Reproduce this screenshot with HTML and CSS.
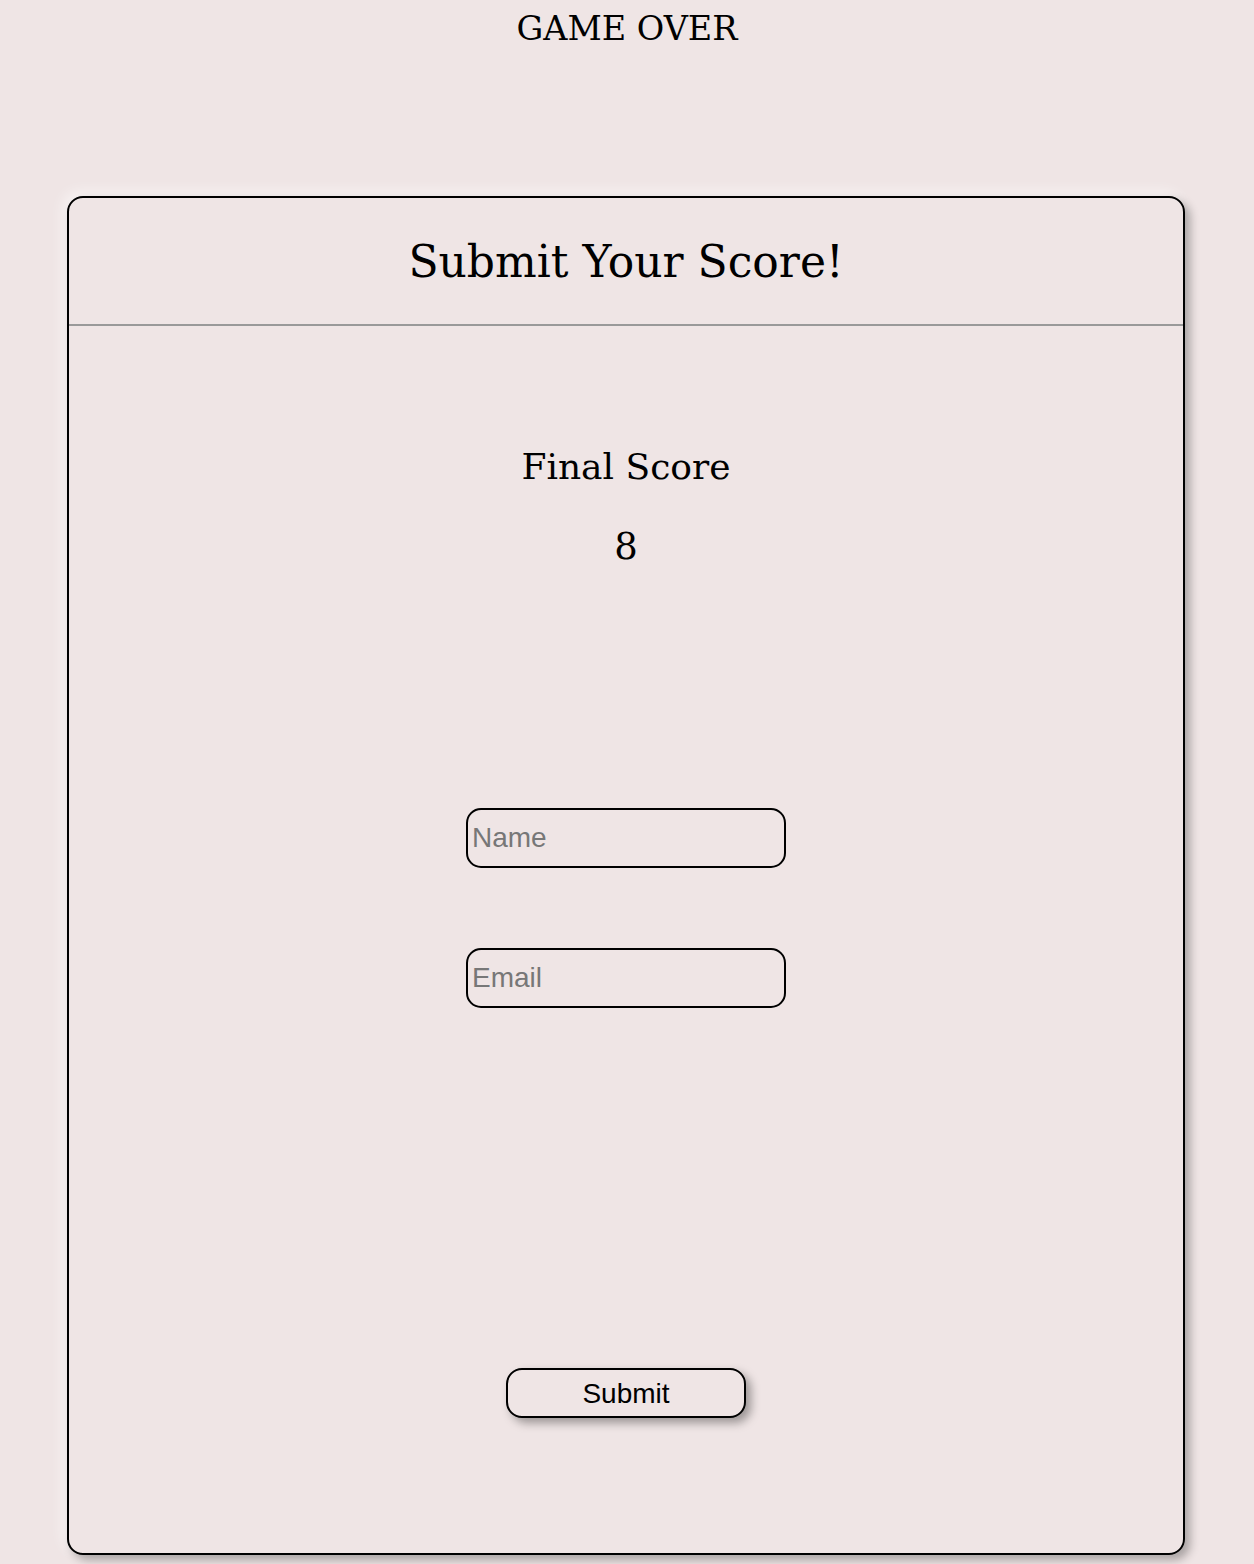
FILE: index.html
```html
<!DOCTYPE html>
<html>
<head>
<meta charset="utf-8">
<link rel="stylesheet" href="styles.css">
</head>
<body>
<h1 class="title">GAME OVER</h1>
<div class="card">
  <div class="card-header">Submit Your Score!</div>
  <div class="card-body">
    <div class="label">Final Score</div>
    <div class="score">8</div>
    <form class="form">
      <input class="field" type="text" placeholder="Name">
      <input class="field" type="email" placeholder="Email">
      <button class="submit" type="button">Submit</button>
    </form>
  </div>
</div>
</body>
</html>
```
FILE: styles.css
```css
html, body { margin: 0; padding: 0; }
body {
  background: #efe5e5;
  font-family: "DejaVu Serif", "Liberation Serif", serif;
  color: #000;
  width: 1254px;
  height: 1564px;
  overflow: hidden;
}
.title {
  margin: 0;
  padding-top: 8px;
  text-align: center;
  font-weight: normal;
  font-size: 33.5px;
  line-height: 42px;
}
.card {
  box-sizing: border-box;
  margin: 146px 69px 0 67px;
  height: 1359px;
  border: 2px solid #000;
  border-radius: 16px;
  box-shadow: 5px 5px 10px rgba(0,0,0,0.3), -4px -4px 14px rgba(255,255,255,0.6);
  display: flex;
  flex-direction: column;
}
.card-header {
  height: 126px;
  border-bottom: 2px solid #999;
  display: flex;
  align-items: center;
  justify-content: center;
  font-size: 44px;
}
.card-body {
  display: flex;
  flex-direction: column;
  align-items: center;
}
.label {
  margin-top: 118px;
  font-size: 36px;
  line-height: 46px;
}
.score {
  margin-top: 34px;
  font-size: 37px;
  line-height: 46px;
}
.form {
  display: flex;
  flex-direction: column;
  align-items: center;
  margin-top: 238px;
}
.field {
  box-sizing: border-box;
  width: 320px;
  height: 60px;
  border: 2px solid #000;
  border-radius: 15px;
  background: transparent;
  font-family: "Liberation Sans", Arial, sans-serif;
  font-size: 28px;
  padding: 0 4px;
  margin-bottom: 80px;
  outline: none;
}
.field::placeholder { color: #777; }
.submit {
  box-sizing: border-box;
  margin-top: 280px;
  width: 240px;
  height: 50px;
  border: 2px solid #000;
  border-radius: 16px;
  background: #efe5e5;
  font-family: "Liberation Sans", Arial, sans-serif;
  font-size: 28px;
  color: #000;
  padding-top: 2px;
  box-shadow: 5px 5px 10px rgba(0,0,0,0.35);
}
```
